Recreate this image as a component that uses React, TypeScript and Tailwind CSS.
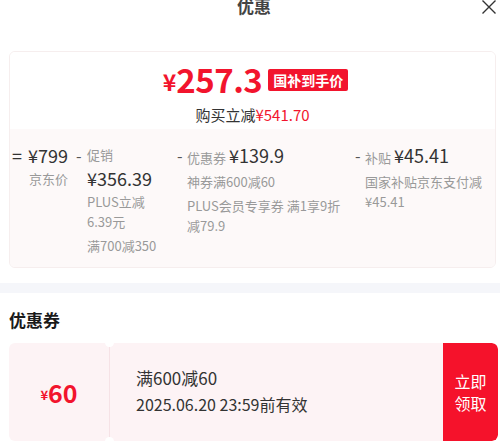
import React from "react";

const FONT = { fontFamily: '"Noto Sans CJK SC", "Noto Sans", sans-serif' };

const App = () => {
  return (
    <div className="w-[500px] h-[446px] bg-white overflow-hidden text-[#333]" style={FONT}>
      {/* header */}
      <div className="relative h-[51px]">
        <div className="absolute left-0 right-0 top-[-4px] text-center text-[17px] leading-[20px] font-bold text-[#444] pl-[8px]">
          优惠
        </div>
        <svg className="absolute right-[3px] top-[0px]" width="16" height="14" viewBox="0 0 16 14">
          <path d="M1.5 0.5 L14.5 13.5 M14.5 0.5 L1.5 13.5" stroke="#333" strokeWidth="1.4" fill="none" />
        </svg>
      </div>

      {/* price card */}
      <div className="mx-[9px] mr-[4px] h-[217px] rounded-[6px] border border-[#f6eeee] overflow-hidden flex flex-col">
        <div className="h-[77px] bg-white flex flex-col items-center pt-[7px]">
          <div className="flex items-center text-[#f2142d] font-semibold pl-[6px]">
            <span className="text-[23px] leading-[36px] mt-[4px]">¥</span>
            <span className="text-[33px] leading-[36px] tracking-[-0.5px]">257.3</span>
            <span className="ml-[6px] mt-[2px] bg-[#f2142d] text-white text-[14px] leading-[22px] font-bold px-[5px] rounded-[2px]">
              国补到手价
            </span>
          </div>
          <div className="text-[15px] leading-[20px] mt-[6px] text-[#333]">
            购买立减<span className="text-[#f2142d]">¥541.70</span>
          </div>
        </div>
        <div className="flex-1 bg-[#fdf9f9] pt-[14px] flex text-[13px] leading-[20px] text-[#999]">
          <div className="w-[18px] pl-[2px] text-[18px] leading-[24px] text-[#333]">=</div>
          <div className="w-[48px] flex flex-col items-start">
            <span className="text-[18px] leading-[24px] text-[#333]">¥799</span>
            <span className="mt-[2px] ml-[1px]">京东价</span>
          </div>
          <div className="w-[11px] text-[16px] leading-[24px] text-[#555]">-</div>
          <div className="w-[90px] flex flex-col">
            <span className="leading-[24px]">促销</span>
            <span className="text-[18px] leading-[22px] text-[#333]">¥356.39</span>
            <span className="mt-[3px]">PLUS立减</span>
            <span>6.39元</span>
            <span className="mt-[4px]">满700减350</span>
          </div>
          <div className="w-[10px] text-[16px] leading-[24px] text-[#555]">-</div>
          <div className="w-[168px] flex flex-col">
            <span className="leading-[24px]">
              优惠券 <span className="text-[18px] text-[#333]">¥139.9</span>
            </span>
            <span className="mt-[2px]">神券满600减60</span>
            <span className="mt-[4px]">PLUS会员专享券 满1享9折</span>
            <span>减79.9</span>
          </div>
          <div className="w-[10px] text-[16px] leading-[24px] text-[#555]">-</div>
          <div className="flex-1 flex flex-col">
            <span className="leading-[24px]">
              补贴 <span className="text-[18px] text-[#333]">¥45.41</span>
            </span>
            <span className="mt-[2px]">国家补贴京东支付减</span>
            <span>¥45.41</span>
          </div>
        </div>
      </div>

      {/* separator */}
      <div className="mt-[15px] h-[10px] bg-[#f5f6fa]" />

      {/* coupon section */}
      <div className="px-[9px] pr-[2px] pt-[16px]">
        <div className="text-[17px] leading-[22px] font-bold text-[#1a1a1a]">优惠券</div>
        <div className="mt-[12px] h-[98px] flex rounded-[6px] overflow-hidden bg-[#fdf3f5]">
          <div className="relative w-[101px] flex items-center justify-center text-[#f2142d] font-semibold border-r border-[#f6e2e6]">
            <span className="text-[13px] mt-[6px]">¥</span>
            <span className="text-[25px] leading-[30px]">60</span>
            <span className="absolute right-[-5px] top-[-5px] w-[9px] h-[9px] rounded-full bg-white" />
            <span className="absolute right-[-5px] bottom-[-5px] w-[9px] h-[9px] rounded-full bg-white" />
          </div>
          <div className="flex-1 flex flex-col justify-center pl-[26px] pb-[3px] text-[#333]">
            <span className="text-[17px] leading-[24px]">满600减60</span>
            <span className="text-[16px] leading-[24px] mt-[2px]">2025.06.20 23:59前有效</span>
          </div>
          <div className="w-[55px] bg-[#f5122b] text-white text-[16px] leading-[22px] flex flex-col items-center justify-center rounded-r-[6px]">
            <span>立即</span>
            <span>领取</span>
          </div>
        </div>
      </div>
    </div>
  );
};

export default App;
